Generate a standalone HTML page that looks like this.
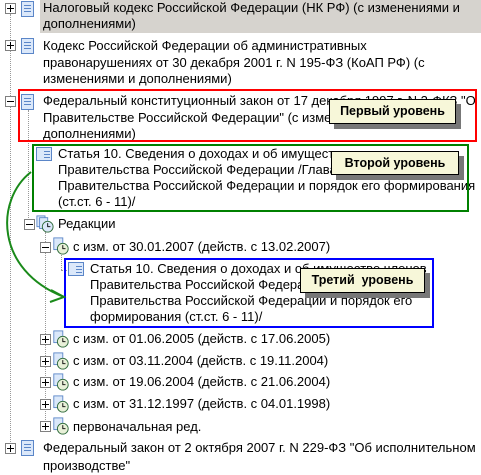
<!DOCTYPE html>
<html><head><meta charset="utf-8"><style>
*{margin:0;padding:0;box-sizing:border-box}
body{width:481px;height:474px;background:#fff;position:relative;overflow:hidden;font-family:"Liberation Sans",Arial,sans-serif;font-size:13px;color:#000}
.t{position:absolute;line-height:16px;white-space:nowrap}
.ex{position:absolute;width:11px;height:11px;border:1px solid #808080;background:#fff}
.ex:before{content:"";position:absolute;left:1px;top:4px;width:7px;height:1px;background:#000}
.ex.p:after{content:"";position:absolute;left:4px;top:1px;width:1px;height:7px;background:#000}
.vl{position:absolute;width:0;border-left:1px dotted #999}
.hl{position:absolute;height:0;border-top:1px dotted #999}
.doc{position:absolute;width:13px;height:16px;background:#dbe8fa;border:1px solid #5b86c8}
.doc:after{content:"";position:absolute;left:2px;top:3px;width:7px;height:8px;background:repeating-linear-gradient(#5b86c8 0 1px,transparent 1px 3px)}
.art{position:absolute;width:16px;height:14px;background:#dbe8fa;border:1px solid #5b86c8}
.art:after{content:"";position:absolute;left:7px;top:3px;width:6px;height:7px;background:repeating-linear-gradient(#5b86c8 0 1px,transparent 1px 3px)}
.clk{position:absolute;width:18px;height:18px}
.lab{position:absolute;background:#f7f7d9;border:1px solid #000;box-shadow:5px 5px 0 #777;font-weight:bold;font-size:12.5px;text-align:center;line-height:23px}
.box{position:absolute}
</style></head><body>
<div class="vl" style="left:10px;top:14px;height:440px"></div>
<div class="vl" style="left:28px;top:110px;height:120px"></div>
<div class="vl" style="left:45px;top:232px;height:200px"></div>
<div class="vl" style="left:61px;top:250px;height:20px"></div>

<div style="position:absolute;left:40px;top:0;width:441px;height:33px;background:#d6d3ce"></div>
<div class="ex p" style="left:5px;top:3px"></div><div class="doc" style="left:21px;top:1px"></div>
<div class="t" style="left:43px;top:0">Налоговый кодекс Российской Федерации (НК РФ) (с изменениями и<br>дополнениями)</div>

<div class="ex p" style="left:5px;top:40px"></div><div class="doc" style="left:21px;top:38px"></div>
<div class="t" style="left:43px;top:38px;line-height:16.5px">Кодекс Российской Федерации об административных<br>правонарушениях от 30 декабря 2001 г. N 195-ФЗ (КоАП РФ) (с<br>изменениями и дополнениями)</div>

<div class="ex" style="left:5px;top:96px"></div><div class="doc" style="left:21px;top:94px"></div>
<div class="t" style="left:43px;top:93px;line-height:16.5px">Федеральный конституционный закон от 17 декабря 1997 г. N 2-ФКЗ "О<br>Правительстве Российской Федерации" (с изменениями и<br>дополнениями)</div>
<div class="box" style="left:18px;top:89px;width:459px;height:53px;border:2px solid #f00"></div>

<div class="art" style="left:36px;top:147px"></div>
<div class="t" style="left:58px;top:146px">Статья 10. Сведения о доходах и об имуществе членов<br>Правительства Российской Федерации /Глава II. Состав<br>Правительства Российской Федерации и порядок его формирования<br>(ст.ст. 6 - 11)/</div>
<div class="box" style="left:32px;top:144px;width:437px;height:68px;border:2px solid #008000"></div>

<div class="ex" style="left:24px;top:219px"></div>
<svg class="clk" style="left:36px;top:215px" viewBox="0 0 20 20"><rect x="1" y="1" width="9" height="12" fill="#dbe8fa" stroke="#5b86c8"/><rect x="4" y="3" width="9" height="12" fill="#dbe8fa" stroke="#5b86c8"/><circle cx="13" cy="13" r="6" fill="#dbe8fa" stroke="#2e6a3a"/><path d="M13 9v4h3" stroke="#000" fill="none"/></svg>
<div class="t" style="left:58px;top:216px">Редакции</div>

<div class="ex" style="left:40px;top:242px"></div>
<svg class="clk" style="left:52px;top:237px" viewBox="0 0 20 20"><rect x="2" y="1" width="10" height="13" fill="#dbe8fa" stroke="#5b86c8"/><circle cx="12" cy="13" r="6" fill="#e8f0d8" stroke="#2e6a3a"/><path d="M12 9v4h3" stroke="#000" fill="none"/></svg>
<div class="t" style="left:73px;top:239px">с изм. от 30.01.2007 (действ. с 13.02.2007)</div>

<div class="hl" style="left:61px;top:270px;width:8px"></div>
<div class="art" style="left:68px;top:262px"></div>
<div class="t" style="left:90px;top:261px">Статья 10. Сведения о доходах и об имуществе членов<br>Правительства Российской Федерации /Глава II. Состав<br>Правительства Российской Федерации и порядок его<br>формирования (ст.ст. 6 - 11)/</div>
<div class="box" style="left:64px;top:258px;width:370px;height:70px;border:2px solid #00f"></div>

<div class="ex p" style="left:40px;top:334px"></div><svg class="clk" style="left:52px;top:330px" viewBox="0 0 20 20"><rect x="2" y="1" width="10" height="13" fill="#dbe8fa" stroke="#5b86c8"/><circle cx="12" cy="13" r="6" fill="#e8f0d8" stroke="#2e6a3a"/><path d="M12 9v4h3" stroke="#000" fill="none"/></svg>
<div class="t" style="left:73px;top:331px">с изм. от 01.06.2005 (действ. с 17.06.2005)</div>
<div class="ex p" style="left:40px;top:356px"></div><svg class="clk" style="left:52px;top:352px" viewBox="0 0 20 20"><rect x="2" y="1" width="10" height="13" fill="#dbe8fa" stroke="#5b86c8"/><circle cx="12" cy="13" r="6" fill="#e8f0d8" stroke="#2e6a3a"/><path d="M12 9v4h3" stroke="#000" fill="none"/></svg>
<div class="t" style="left:73px;top:353px">с изм. от 03.11.2004 (действ. с 19.11.2004)</div>
<div class="ex p" style="left:40px;top:377px"></div><svg class="clk" style="left:52px;top:373px" viewBox="0 0 20 20"><rect x="2" y="1" width="10" height="13" fill="#dbe8fa" stroke="#5b86c8"/><circle cx="12" cy="13" r="6" fill="#e8f0d8" stroke="#2e6a3a"/><path d="M12 9v4h3" stroke="#000" fill="none"/></svg>
<div class="t" style="left:73px;top:374px">с изм. от 19.06.2004 (действ. с 21.06.2004)</div>
<div class="ex p" style="left:40px;top:399px"></div><svg class="clk" style="left:52px;top:395px" viewBox="0 0 20 20"><rect x="2" y="1" width="10" height="13" fill="#dbe8fa" stroke="#5b86c8"/><circle cx="12" cy="13" r="6" fill="#e8f0d8" stroke="#2e6a3a"/><path d="M12 9v4h3" stroke="#000" fill="none"/></svg>
<div class="t" style="left:73px;top:396px">с изм. от 31.12.1997 (действ. с 04.01.1998)</div>
<div class="ex p" style="left:40px;top:421px"></div><svg class="clk" style="left:52px;top:417px" viewBox="0 0 20 20"><rect x="2" y="1" width="10" height="13" fill="#dbe8fa" stroke="#5b86c8"/><circle cx="12" cy="13" r="6" fill="#e8f0d8" stroke="#2e6a3a"/><path d="M12 9v4h3" stroke="#000" fill="none"/></svg>
<div class="t" style="left:73px;top:419px">первоначальная ред.</div>

<div class="ex p" style="left:5px;top:443px"></div><div class="doc" style="left:21px;top:440px"></div>
<div class="t" style="left:43px;top:439px;line-height:18px">Федеральный закон от 2 октября 2007 г. N 229-ФЗ "Об исполнительном<br>производстве"</div>

<svg style="position:absolute;left:0;top:0" width="481" height="474"><path d="M31 172 C-5 200,-5 270,64 297" stroke="#1a8a1a" stroke-width="2" fill="none"/><path d="M51 290 L64 297 L50 302" stroke="#1a8a1a" stroke-width="2" fill="none"/></svg>

<div class="lab" style="left:329px;top:99px;width:127px;height:25px">Первый уровень</div>
<div class="lab" style="left:331px;top:151px;width:128px;height:24px">Второй уровень</div>
<div class="lab" style="left:300px;top:268px;width:125px;height:25px">Третий&nbsp; уровень</div>
</body></html>
